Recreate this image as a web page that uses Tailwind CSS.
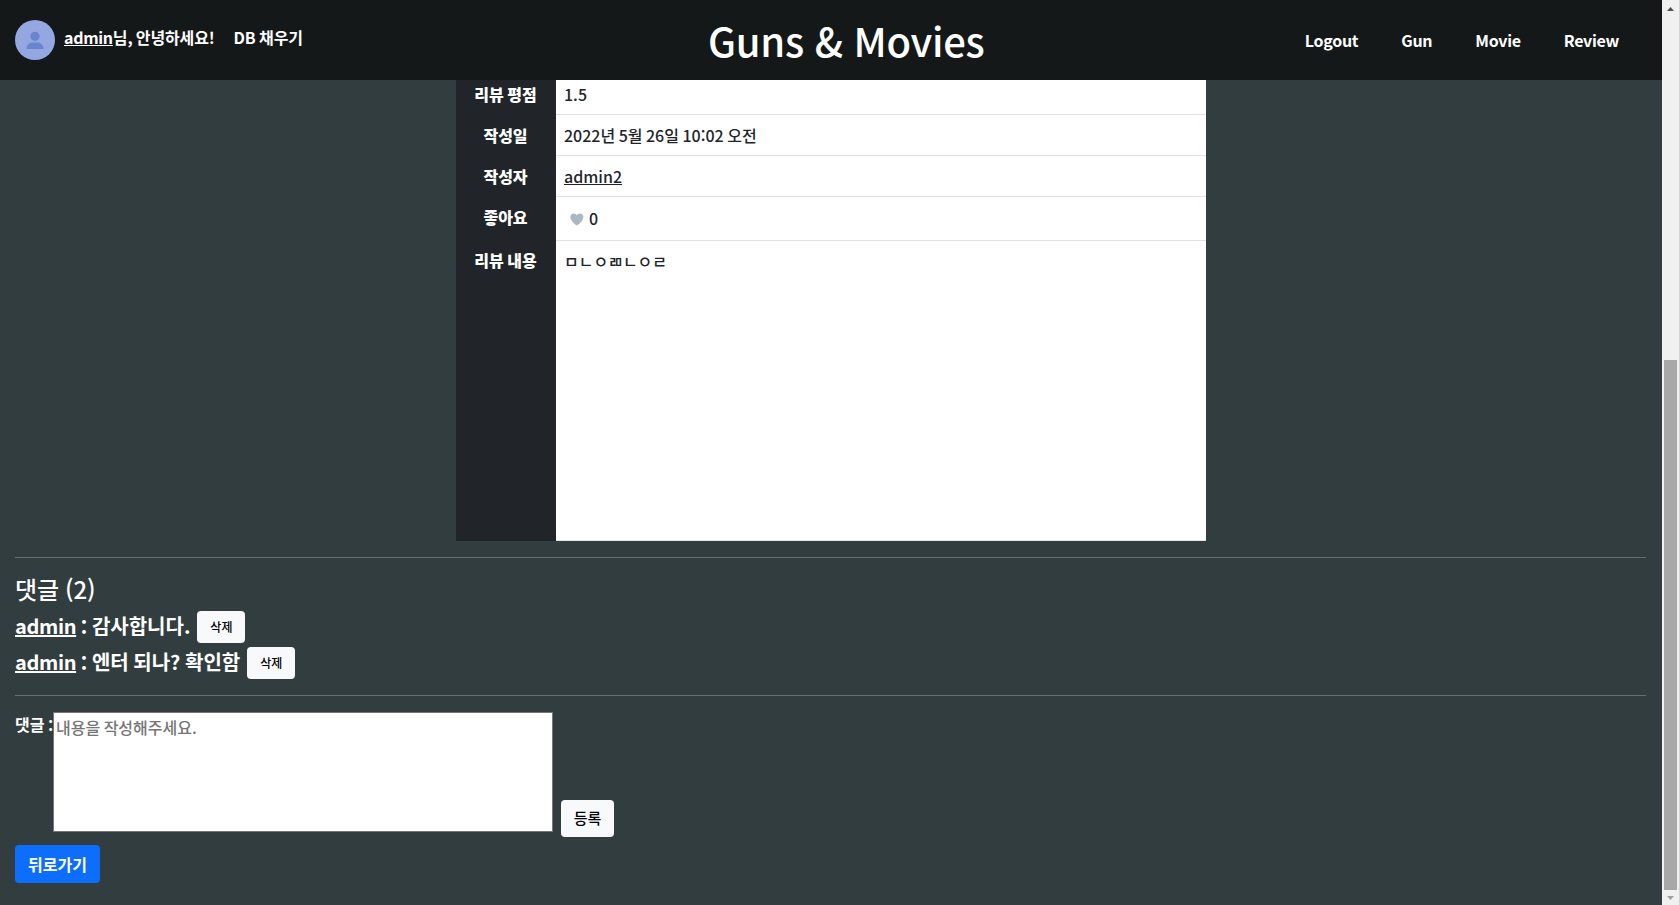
<!DOCTYPE html>
<html lang="ko">
<head>
<meta charset="utf-8">
<title>Guns &amp; Movies</title>
<script src="https://cdn.jsdelivr.net/npm/@tailwindcss/browser@4"></script>
</head>
<body class="flex h-[905px] w-[1679px] overflow-hidden bg-[#323d3f] font-['Noto_Sans_CJK_KR',sans-serif] text-base leading-6 font-medium text-[#212529]">
<div class="flex h-full w-[1662px] flex-col">
  <header class="flex h-20 shrink-0 items-center bg-[#151819] text-white">
    <div class="flex w-[708px] items-center pl-[15px]">
      <svg class="size-10" viewBox="0 0 40 40"><circle cx="20" cy="20" r="20" fill="#94a7e0"/><circle cx="20" cy="16.3" r="4.6" fill="#6984d0"/><path d="M11.500 29c0-4 3-6.500 6-6.500h5c3 0 6 2.500 6 6.500z" fill="#6984d0"/></svg>
      <div class="ml-[9px] flex gap-[19px] pb-1.5 font-bold whitespace-nowrap [word-spacing:-1px]"><span class="tracking-[-0.14px]"><a class="tracking-[-0.3px] underline">admin</a>님, 안녕하세요!</span><span class="tracking-[-0.1px]">DB 채우기</span></div>
    </div>
    <h1 class="pb-px text-[40px] leading-[48px] tracking-[-0.3px] whitespace-nowrap">Guns &amp; Movies</h1>
    <nav class="ml-auto flex gap-[43px] pr-[43px] font-bold tracking-[-0.3px]"><a>Logout</a><a>Gun</a><a>Movie</a><a>Review</a></nav>
  </header>
  <main class="flex flex-col px-[15px] [word-spacing:-1px]">
    <div class="mx-auto grid w-[750px] grid-cols-[100px_1fr] grid-rows-[35px_41px_41px_44px_300px] bg-[#212529]">
      <div class="pt-0.5 pr-px text-center font-black text-white">리뷰 평점</div>
      <div class="border-b border-[#dee2e6] bg-white px-2 pt-0.5">1.5</div>
      <div class="pt-2 pr-px text-center font-black text-white">작성일</div>
      <div class="border-b border-[#dee2e6] bg-white px-2 pt-2">2022년 5월 26일 10:02 오전</div>
      <div class="pt-2 pr-px text-center font-black text-white">작성자</div>
      <div class="border-b border-[#dee2e6] bg-white px-2 pt-2"><a class="underline">admin2</a></div>
      <div class="pt-2 pr-px text-center font-black text-white">좋아요</div>
      <div class="flex border-b border-[#dee2e6] bg-white px-2 pt-[9px]">
        <svg class="mt-[7px] mr-[5px] ml-1.5 h-[13px] w-[14px]" viewBox="0 0 14 13"><path d="M13.300 3.800C13.300 1.900 11.800.5 10 .5 8.700.5 7.500 1.200 6.800 2.300 6.200 1.200 5 .5 3.700.5 1.900.5.400 1.900.4 3.800c0 3.800 3.700 7.100 6.400 8.700 2.800-1.600 6.500-4.900 6.500-8.700z" fill="#aab8c2"/></svg>0</div>
      <div class="pt-[7px] pr-px text-center font-black text-white">리뷰 내용</div>
      <div class="border-b border-[#dee2e6] bg-white px-2 pt-2">ㅁㄴㅇㄻㄴㅇㄹ</div>
    </div>
    <hr class="mt-4 mr-px border-[#656d6e]">
    <h3 class="mt-4 text-2xl leading-[29px] text-white">댓글 (2)</h3>
    <div class="mt-2 flex h-9 items-start text-[20px] leading-6 font-bold text-white"><span class="mt-[3px] whitespace-pre"><a class="tracking-[-0.35px] underline">admin</a> <span class="inline-block translate-y-px">:</span> 감사합니다.</span><button class="ml-[7px] h-8 w-12 rounded bg-[#f8f9fa] text-[12px] font-medium text-black">삭제</button></div>
    <div class="flex h-9 items-start text-[20px] leading-6 font-bold text-white"><span class="mt-[3px] whitespace-pre"><a class="tracking-[-0.35px] underline">admin</a> <span class="inline-block translate-y-px">:</span> 엔터 되나? 확인함</span><button class="ml-[7px] h-8 w-12 rounded bg-[#f8f9fa] text-[12px] font-medium text-black">삭제</button></div>
    <hr class="mt-3 mr-px border-[#656d6e]">
    <div class="mt-4 flex h-[125px] text-white">
      <label class="w-[38px] text-base font-bold whitespace-nowrap">댓글 <span class="inline-block translate-y-px">:</span></label>
      <textarea class="h-[120px] w-[500px] resize-none border border-[#767676] bg-white p-0.5 text-base leading-6 text-black [word-spacing:-1px] placeholder:text-[#757575]" placeholder="내용을 작성해주세요."></textarea>
      <button class="ml-2 h-[37px] w-[53px] self-end rounded bg-[#f8f9fa] pb-0.5 text-[15px] font-medium text-black">등록</button>
    </div>
    <button class="mt-2 h-[38px] w-[85px] rounded bg-[#0d6efd] text-base font-bold text-white">뒤로가기</button>
  </main>
</div>
<div class="flex h-full w-[17px] flex-col items-center bg-[#f0f0f0]">
  <svg class="h-[360px] w-[17px] shrink-0" viewBox="0 0 17 360"><path d="M5 11h7L8.500 7z" fill="#505050"/></svg>
  <div class="h-[530px] w-[13px] bg-[#a8a8a8]"></div>
  <svg class="h-[15px] w-[17px]" viewBox="0 0 17 15"><path d="M5 6h7l-3.500 4z" fill="#a0a0a0"/></svg>
</div>
</body>
</html>
